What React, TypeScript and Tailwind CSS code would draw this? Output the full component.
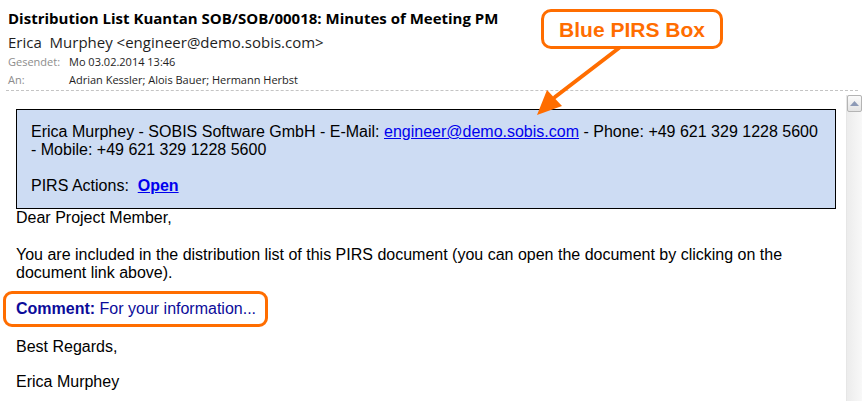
import React from 'react';

const segoe = { fontFamily: '"Open Sans", "Noto Sans", sans-serif' };

function CalloutArrow() {
  return (
    <svg className="absolute left-[525px] top-[44px]" width="110" height="80" viewBox="0 0 110 80">
      <line x1="94" y1="4" x2="30" y2="53" stroke="#ff6d00" strokeWidth="4" strokeLinecap="round" />
      <polygon points="12,71 22,46 37,62" fill="#ff6d00" />
    </svg>
  );
}

function Scrollbar() {
  return (
    <div className="w-[16px] mt-[4px] mr-[1px] bg-gradient-to-r from-[#ececec] to-[#f8f8f8] border-l border-[#e6e6e6] flex flex-col">
      <div className="h-[17px] rounded-[2px] border border-[#b4b4b4] bg-gradient-to-b from-[#fafafa] to-[#e4e4e4] flex items-center justify-center">
        <svg width="9" height="5" viewBox="0 0 9 5">
          <polygon points="0,5 4.5,0 9,5" fill="#8d9ab6" />
        </svg>
      </div>
    </div>
  );
}

export default function App() {
  return (
    <div className="relative w-[863px] h-[401px] overflow-hidden bg-white flex flex-col">
      <header className="pl-2 pt-2 text-[#1e1e1e]" style={segoe}>
        <h1 className="text-[15px] leading-[20px] font-bold text-black">
          Distribution List Kuantan SOB/SOB/00018: Minutes of Meeting PM
        </h1>
        <div className="mt-1 text-[15px] leading-[20px] whitespace-pre">Erica  Murphey &lt;engineer@demo.sobis.com&gt;</div>
        <div className="mt-[1px] text-[11px] leading-[18px]">
          <div className="flex">
            <span className="w-[61px] text-[#8d8d8d]">Gesendet:</span>
            <span>Mo 03.02.2014 13:46</span>
          </div>
          <div className="flex">
            <span className="w-[61px] text-[#8d8d8d]">An:</span>
            <span>Adrian Kessler; Alois Bauer; Hermann Herbst</span>
          </div>
        </div>
      </header>
      <div className="mt-[1px] ml-[6px] mr-[5px] border-t border-dashed border-[#c4c4c4]" />

      <div className="flex flex-1 min-h-0">
        <main
          className="flex-1 pl-4 pr-[10px] pt-[18px] text-[16px] leading-[18px] text-black"
          style={{ fontFamily: '"Liberation Sans", Arial, sans-serif' }}
        >
          <div className="border border-black bg-[#cddcf3] px-[14px] py-[13px]">
            Erica Murphey - SOBIS Software GmbH - E-Mail:{' '}
            <a className="text-[#0000ee] underline">engineer@demo.sobis.com</a> - Phone: +49 621 329 1228 5600
            <br />- Mobile: +49 621 329 1228 5600
            <br />
            <br />
            PIRS Actions:&nbsp;{' '}
            <a className="font-bold text-[#0000ee] underline">Open</a>
          </div>

          <p>Dear Project Member,</p>
          <p className="mt-[19px] pr-4">
            You are included in the distribution list of this PIRS document (you can open the document by clicking on the
            document link above).
          </p>

          <div className="mt-[9px] -ml-[13px] inline-block border-[3px] border-[#ff6d00] rounded-[9px] pl-[10px] pr-[9px] py-[6px] text-[#0b0b9a]">
            <span className="font-bold">Comment:</span> For your information...
          </div>

          <p className="mt-[11px]">Best Regards,</p>
          <p className="mt-[17px]">Erica Murphey</p>
        </main>
        <Scrollbar />
      </div>

      <div className="absolute left-[541px] top-[9px] w-[182px] h-[40px] border-[3px] border-[#ff6d00] rounded-[10px] bg-white flex items-center justify-center">
        <span
          className="text-[21px] leading-none font-bold text-[#ff6d00]"
          style={{ fontFamily: '"Liberation Sans", Arial, sans-serif' }}
        >
          Blue PIRS Box
        </span>
      </div>
      <CalloutArrow />
    </div>
  );
}
